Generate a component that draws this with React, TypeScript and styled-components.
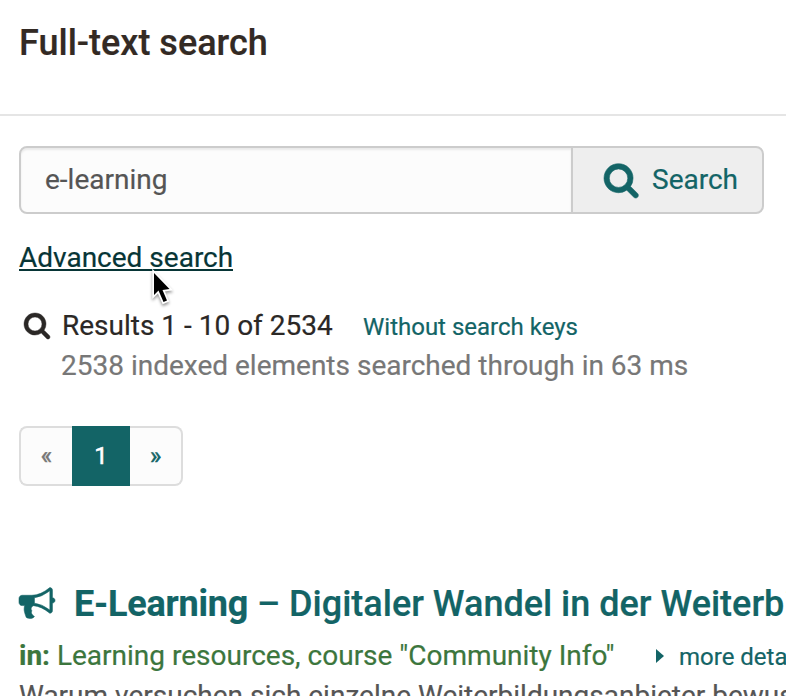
import React from "react";
import styled, { createGlobalStyle } from "styled-components";

const GlobalStyle = createGlobalStyle`
  html, body { margin: 0; padding: 0; overflow: hidden; background: #fff; }
  * { box-sizing: border-box; }
  body { font: 400 28px/40px Roboto, sans-serif; color: #2b2826; -webkit-text-stroke: 0.2px currentColor; }
`;

const Page = styled.div`
  width: 786px;
  height: 696px;
  overflow: hidden;
  white-space: nowrap;
`;

const Header = styled.header`
  height: 116px;
  padding: 23px 19px 0;
  border-bottom: 2px solid #e5e5e5;
`;

const Title = styled.h1`
  margin: 0;
  font-size: 36px;
  line-height: 40px;
  font-weight: 500;
  color: #332a24;
`;

const Content = styled.main`
  padding: 30px 0 0 19px;
`;

const SearchGroup = styled.form`
  display: flex;
  width: 745px;
  height: 68px;
`;

const SearchInput = styled.input`
  width: 554px;
  padding: 0 24px;
  border: 2px solid #ccc;
  border-radius: 8px 0 0 8px;
  background: #fcfcfc;
  box-shadow: inset 0 2px 2px rgba(0, 0, 0, 0.075);
  color: #555;
  font: 400 28px/40px Roboto, sans-serif;
  outline: none;
`;

const SearchButton = styled.button`
  display: flex;
  align-items: center;
  width: 193px;
  margin-left: -2px;
  padding: 0 0 0 31px;
  gap: 11px;
  border: 2px solid #ccc;
  border-radius: 0 8px 8px 0;
  background: #eee;
  color: #136466;
  font: 400 28px/40px Roboto, sans-serif;
`;

const Glyph = styled.svg<{ $size: number; $top?: number }>`
  flex: none;
  display: block;
  width: ${(p) => p.$size}px;
  height: ${(p) => p.$size}px;
  margin-top: ${(p) => p.$top ?? 0}px;
  fill: currentColor;
  stroke: currentColor;
  stroke-width: 28px;
  overflow: visible;
`;

const AdvancedRow = styled.div`
  height: 40px;
  margin-top: 24px;
`;

const AdvancedLink = styled.a`
  position: relative;
  display: inline-block;
  height: 33px;
  border-bottom: 2px solid #073536;
  color: #073536;
`;

const Pointer = styled.svg`
  position: absolute;
  left: 128px;
  top: 28px;
  width: 32px;
  height: 42px;
  overflow: visible;
  filter: drop-shadow(0 2px 1.5px rgba(0, 0, 0, 0.4));
`;

const ResultRow = styled.div`
  display: flex;
  height: 40px;
  margin-top: 28px;
  padding-left: 5px;
`;

const ResultCount = styled.span`
  width: 301px;
  margin-left: 10px;
`;

const SmallLink = styled.a`
  font-size: 24px;
  line-height: 42px;
  color: #136466;
`;

const Summary = styled.div`
  height: 40px;
  padding-left: 42px;
  color: #777;
`;

const Pagination = styled.nav`
  display: flex;
  width: 164px;
  height: 60px;
  margin-top: 40px;
`;

const PageItem = styled.a<{ $kind: "previous" | "current" | "next" }>`
  width: ${(p) => (p.$kind === "current" ? 58 : 53)}px;
  border: 2px solid ${(p) => (p.$kind === "current" ? "#136466" : "#ddd")};
  border-left-width: ${(p) => (p.$kind === "next" ? 0 : 2)}px;
  border-right-width: ${(p) => (p.$kind === "previous" ? 0 : 2)}px;
  border-radius: ${(p) => p.$kind === "previous" ? "8px 0 0 8px" : p.$kind === "next" ? "0 8px 8px 0" : "0"};
  background: ${(p) => (p.$kind === "current" ? "#136466" : "#fcfcfc")};
  color: ${(p) => p.$kind === "current" ? "#fff" : p.$kind === "previous" ? "#777" : "#136466"};
  font-size: 24px;
  line-height: 56px;
  text-align: center;
  -webkit-text-stroke-width: 0.5px;
`;

const Result = styled.article`
  margin-top: 98px;
`;

const ResultTitle = styled.h2`
  display: flex;
  height: 40px;
  margin: 0;
  font-size: 36px;
  line-height: 40px;
  font-weight: 500;
  color: #136466;
`;

const TitleText = styled.span`
  margin-left: 19px;
`;

const Keyword = styled.b`
  letter-spacing: -0.22px;
`;

const MetaRow = styled.div`
  display: flex;
  height: 40px;
  margin-top: 12px;
  color: #3c763d;
`;

const Location = styled.span`
  flex: none;
  width: 637px;
`;

const DetailsLink = styled(SmallLink)`
  display: flex;
  flex: none;
  gap: 15px;
`;

const Caret = styled.svg`
  width: 8px;
  height: 14px;
  margin-top: 13px;
  fill: currentColor;
`;

const Description = styled.p`
  margin: 0;
  color: #555;
`;

const searchPath = "M1152 832q0-185-131.5-316.5t-316.5-131.5-316.5 131.5-131.5 316.5 131.5 316.5 316.5 131.5 316.5-131.5 131.5-316.5zm512 832q0 52-38 90t-90 38q-54 0-90-38l-343-342q-179 124-399 124-143 0-273.5-55.5t-225-150-150-225-55.5-273.5 55.5-273.5 150-225 225-150 273.5-55.5 273.5 55.5 225 150 150 225 55.5 273.5q0 220-124 399l343 343q37 37 37 90z";
const bullhornPath = "M1664 640q53 0 90.5 37.5t37.5 90.5-37.5 90.5-90.5 37.5v384q0 52-38 90t-90 38q-417-347-812-380-58 19-91 66t-31 100.5 40 92.5q-20 33-23 65.5t6 58 33.5 55 48 50 61.5 50.5q-29 58-111.5 83t-168.5 11.5-132-55.5q-7-23-29.5-87.5t-32-94.5-23-89-15-101 3.5-98.5 22-110.5h-122q-66 0-113-47t-47-113v-192q0-66 47-113t113-47h480q435 0 896-384 52 0 90 38t38 90v384zm-128 604v-954q-394 302-768 343v270q377 42 768 341z";

const Icon = ({ path, size, top }: { path: string; size: number; top?: number }) => (
  <Glyph $size={size} $top={top} viewBox="0 0 1792 1792" aria-hidden="true">
    <path d={path} />
  </Glyph>
);

export default function App() {
  return (
    <Page>
      <GlobalStyle />
      <Header><Title>Full-text search</Title></Header>
      <Content>
        <SearchGroup onSubmit={(e) => e.preventDefault()}>
          <SearchInput defaultValue="e-learning" aria-label="Search text" />
          <SearchButton type="submit"><Icon path={searchPath} size={37} top={-1} />Search</SearchButton>
        </SearchGroup>
        <AdvancedRow>
          <AdvancedLink>
            Advanced search
            <Pointer viewBox="0 0 32 42" aria-hidden="true">
              <path d="M7 7V29L11.5 24.5L16.5 36L20 34.5L15.5 24L22.5 23Z" fill="#000" stroke="#fff" strokeWidth="3.4" paintOrder="stroke" />
            </Pointer>
          </AdvancedLink>
        </AdvancedRow>
        <ResultRow>
          <Icon path={searchPath} size={28} top={5} />
          <ResultCount>Results 1 - 10 of 2534</ResultCount>
          <SmallLink>Without search keys</SmallLink>
        </ResultRow>
        <Summary>2538 indexed elements searched through in 63 ms</Summary>
        <Pagination>
          <PageItem $kind="previous">«</PageItem>
          <PageItem $kind="current">1</PageItem>
          <PageItem $kind="next">»</PageItem>
        </Pagination>
        <Result>
          <ResultTitle>
            <Icon path={bullhornPath} size={36} top={1} />
            <TitleText><Keyword>E-Learning</Keyword> – Digitaler Wandel in der Weiterbildung</TitleText>
          </ResultTitle>
          <MetaRow>
            <Location><b>in:</b> Learning resources, course "Community Info"</Location>
            <DetailsLink><Caret viewBox="0 0 8 14"><path d="M0 0L8 7L0 14Z" /></Caret>more details</DetailsLink>
          </MetaRow>
          <Description>Warum versuchen sich einzelne Weiterbildungsanbieter bewusst</Description>
        </Result>
      </Content>
    </Page>
  );
}
